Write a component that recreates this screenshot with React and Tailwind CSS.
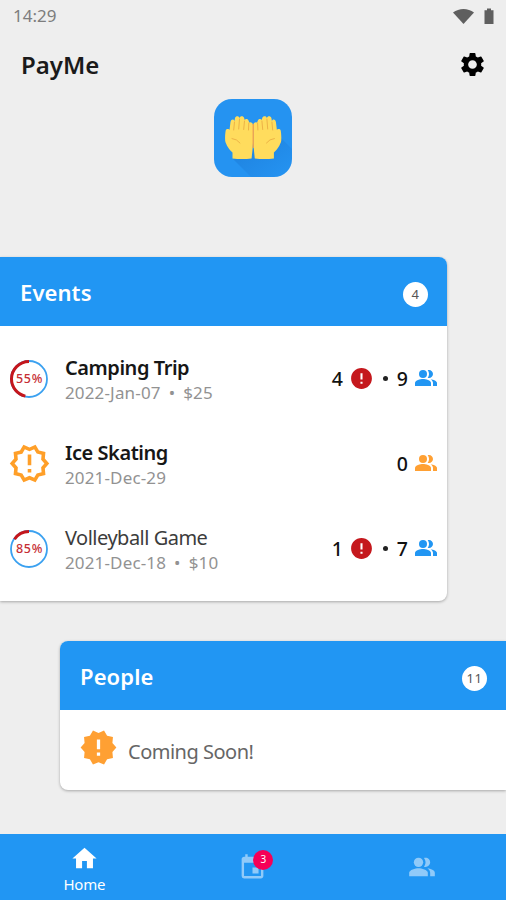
import { MdError, MdEvent, MdHome, MdNewReleases, MdOutlineNewReleases, MdSettings } from "react-icons/md";

const events = [
  { id: 1, name: "Camping Trip", date: "2022-Jan-07", price: "$25", paid: 55, unpaid: 4, people: 9 },
  { id: 2, name: "Ice Skating", date: "2021-Dec-29", price: null, paid: null, unpaid: 0, people: 0 },
  { id: 3, name: "Volleyball Game", date: "2021-Dec-18", price: "$10", paid: 85, unpaid: 1, people: 7, past: true },
];

function PeopleIcon({ size, className }) {
  return (
    <svg width={size} height={size} viewBox="0 0 24 24" fill="currentColor" className={className}>
      <circle cx="9" cy="8" r="4" />
      <path d="M9 13c-2.670 0-8 1.340-8 4v3h16v-3c0-2.660-5.330-4-8-4z" />
      <path d="M15 12c2.210 0 4-1.790 4-4s-1.790-4-4-4c-.47 0-.91.1-1.330.240C14.500 5.270 15 6.580 15 8s-.5 2.730-1.330 3.760c.42.140.86.240 1.330.240z" />
      <path d="M16.670 13.130C18.040 14.060 19 15.320 19 17v3h4v-3c0-2.180-3.570-3.470-6.330-3.870z" />
    </svg>
  );
}

function StatusBar() {
  return (
    <div className="flex h-8 items-center justify-between pl-[13px] pr-3 text-[#7d7d7d]">
      <span className="pb-px text-[17px] leading-none">14:29</span>
      <div className="flex items-center gap-[9px]">
        <svg width="23" height="17" viewBox="0 0 23 17" fill="#5f5f5f">
          <path d="M1 4.600C7 -.3 16 -.3 22 4.600L11.500 16Z" />
        </svg>
        <svg width="10" height="17" viewBox="0 0 10 17" fill="#5f5f5f">
          <path d="M3 .5h4v1.800h2.500V16h-9V2.300h2.500z" />
        </svg>
      </div>
    </div>
  );
}

function Logo() {
  return (
    <svg width="80" height="80" viewBox="0 0 80 80">
      <defs>
        <clipPath id="tileClip">
          <rect x="1" y="1" width="78" height="78" rx="18" />
        </clipPath>
        <linearGradient id="shade" x1="0.200" y1="0.200" x2="0.800" y2="0.800">
          <stop offset="0" stopColor="#1976d2" stopOpacity=".5" />
          <stop offset="1" stopColor="#1976d2" stopOpacity="0" />
        </linearGradient>
      </defs>
      <rect x="1" y="1" width="78" height="78" rx="18" fill="#2593f1" />
      <path d="M20 61L66 38L88 60V88H47Z" fill="url(#shade)" clipPath="url(#tileClip)" />
      <g id="hand">
        <path
          d="M19.500 60.500V54.500C16 51.500 13 46.500 12.200 43C11.900 39 12.200 35 12.700 32.500C13.300 30.600 16 30.600 16.500 32L17.500 24C18 20.800 21 20.800 21.500 23L22 20C22.800 17.600 26 17.600 26.500 20.200C27 17.600 30.500 17.600 31.200 20.200L31.700 22C32.500 20.500 35.200 20.800 35.700 23L36.300 24.500Q39.800 23.800 40 27V45Q39.500 53 38.600 60.500Q29 61.500 19.500 60.500Z"
          fill="#ffdc5d"
        />
        <path
          d="M21.500 24L20.700 32M26.500 21L25.700 31M31.500 23L30.700 31.500M35.800 25L35.500 32M19 40.500Q24 41 27 45"
          fill="none"
          stroke="#edb346"
          strokeWidth="1"
          strokeLinecap="round"
        />
      </g>
      <use href="#hand" transform="translate(80.400 0) scale(-1 1)" />
      <path d="M40.200 26V50" stroke="#f3a14e" strokeWidth="1.300" />
    </svg>
  );
}

// the red part is the unpaid share and runs anticlockwise from the top
function ProgressRing({ value }) {
  const r = 18;
  const length = 2 * Math.PI * r;
  const rest = ((100 - value) / 100) * length;
  return (
    <div className="grid size-10 shrink-0 place-items-center">
      <svg width="40" height="40" viewBox="0 0 40 40" className="col-start-1 row-start-1">
        <circle cx="20" cy="20" r={r} fill="none" stroke="#3ba1f0" strokeWidth="1.800" />
        <circle
          cx="20"
          cy="20"
          r={r - 0.5}
          fill="none"
          stroke="#c4161c"
          strokeWidth="3"
          strokeDasharray={`${rest} ${length}`}
          transform="translate(40 0) scale(-1 1) rotate(-90 20 20)"
        />
      </svg>
      <span className="col-start-1 row-start-1 pl-px pt-px text-[12.5px] font-medium leading-none tracking-[0.6px] text-[#c62f35]">
        {value}%
      </span>
    </div>
  );
}

function CardHeader({ title, count }) {
  return (
    <div className="flex h-[69px] items-center justify-between bg-[#2196f3] pl-5 pr-[19px]">
      <h2 className="pt-px text-[22px] font-semibold tracking-[0.1px] text-white">{title}</h2>
      <span className="mt-1.5 flex size-[25px] items-center justify-center rounded-full bg-white text-[13px] tracking-[0.5px] text-[#555]">
        {count}
      </span>
    </div>
  );
}

function EventRow({ event }) {
  return (
    <li className="flex h-[85px] items-center pl-[9px] pr-[9px]">
      {event.paid === null ? (
        <MdOutlineNewReleases size={43} className="-ml-px -mr-0.5 shrink-0 text-[#ff9f28]" />
      ) : (
        <ProgressRing value={event.paid} />
      )}
      <div className="ml-4 flex-1 pt-0.5">
        <p
          className={`text-[20px] leading-[25px] ${
            event.past ? "tracking-[-0.5px] text-[#3c3c3c]" : "font-semibold tracking-[-0.45px] text-[#161616]"
          }`}
        >
          {event.name}
        </p>
        <p className="text-[17px] leading-[25px] tracking-[0.15px] text-[#929292]">
          {event.date}
          {event.price && (
            <>
              <span className="mx-2">•</span>
              {event.price}
            </>
          )}
        </p>
      </div>
      <div className="flex items-center text-[19.5px] font-medium text-[#111]">
        {event.unpaid > 0 && (
          <>
            <span>{event.unpaid}</span>
            <MdError size={25} className="ml-1.5 text-[#c5181d]" />
            <span className="mx-[9px] size-[5px] rounded-full bg-[#222]" />
          </>
        )}
        <span>{event.people}</span>
        <PeopleIcon size={24} className={`mb-0.5 ml-1.5 ${event.people ? "text-[#2196f3]" : "text-[#ffa033]"}`} />
      </div>
    </li>
  );
}

function BottomNav() {
  return (
    <nav className="grid h-[66px] grid-cols-3 bg-[#2196f3] text-white">
      <div className="flex flex-col items-center pt-[10px]">
        <MdHome size={29} />
        <span className="mt-0.5 text-[15px] leading-[18px] tracking-[-0.2px]">Home</span>
      </div>
      <div className="flex items-center justify-center">
        <div className="relative">
          <MdEvent size={29} className="text-[#90caf9]" />
          <span className="absolute -right-[6px] -top-[3px] flex size-5 items-center justify-center rounded-full bg-[#f50057] text-[10px]">
            3
          </span>
        </div>
      </div>
      <div className="flex items-center justify-center pb-px">
        <PeopleIcon size={28} className="text-[#90caf9]" />
      </div>
    </nav>
  );
}

export default function App() {
  return (
    <div className="flex h-[900px] w-[506px] flex-col overflow-hidden bg-[#eeeeee] font-['Noto_Sans',sans-serif]">
      <StatusBar />

      <header className="flex h-[66px] items-center justify-between pl-[21px] pr-[19px]">
        <h1 className="text-[24px] font-semibold text-[#1a1a1a]">PayMe</h1>
        <MdSettings size={29} className="mb-0.5 text-black" />
      </header>

      <div className="flex h-[159px] justify-center">
        <Logo />
      </div>

      <section className="h-[344px] w-[447px] overflow-hidden rounded-r-lg bg-white shadow-[0_1px_3px_rgba(0,0,0,0.3)]">
        <CardHeader title="Events" count={4} />
        <ul className="pt-[10px]">
          {events.map((event) => (
            <EventRow key={event.id} event={event} />
          ))}
        </ul>
      </section>

      <section className="ml-[60px] mt-10 h-[149px] overflow-hidden rounded-l-lg bg-white shadow-[0_1px_3px_rgba(0,0,0,0.3)]">
        <CardHeader title="People" count={11} />
        <div className="flex items-center pl-[19px] pt-[17px]">
          <MdNewReleases size={39} className="text-[#ffa033]" />
          <span className="ml-[10px] mt-2.5 text-[20px] tracking-[-0.5px] text-[#666]">Coming Soon!</span>
        </div>
      </section>

      <div className="mt-auto">
        <BottomNav />
      </div>
    </div>
  );
}
